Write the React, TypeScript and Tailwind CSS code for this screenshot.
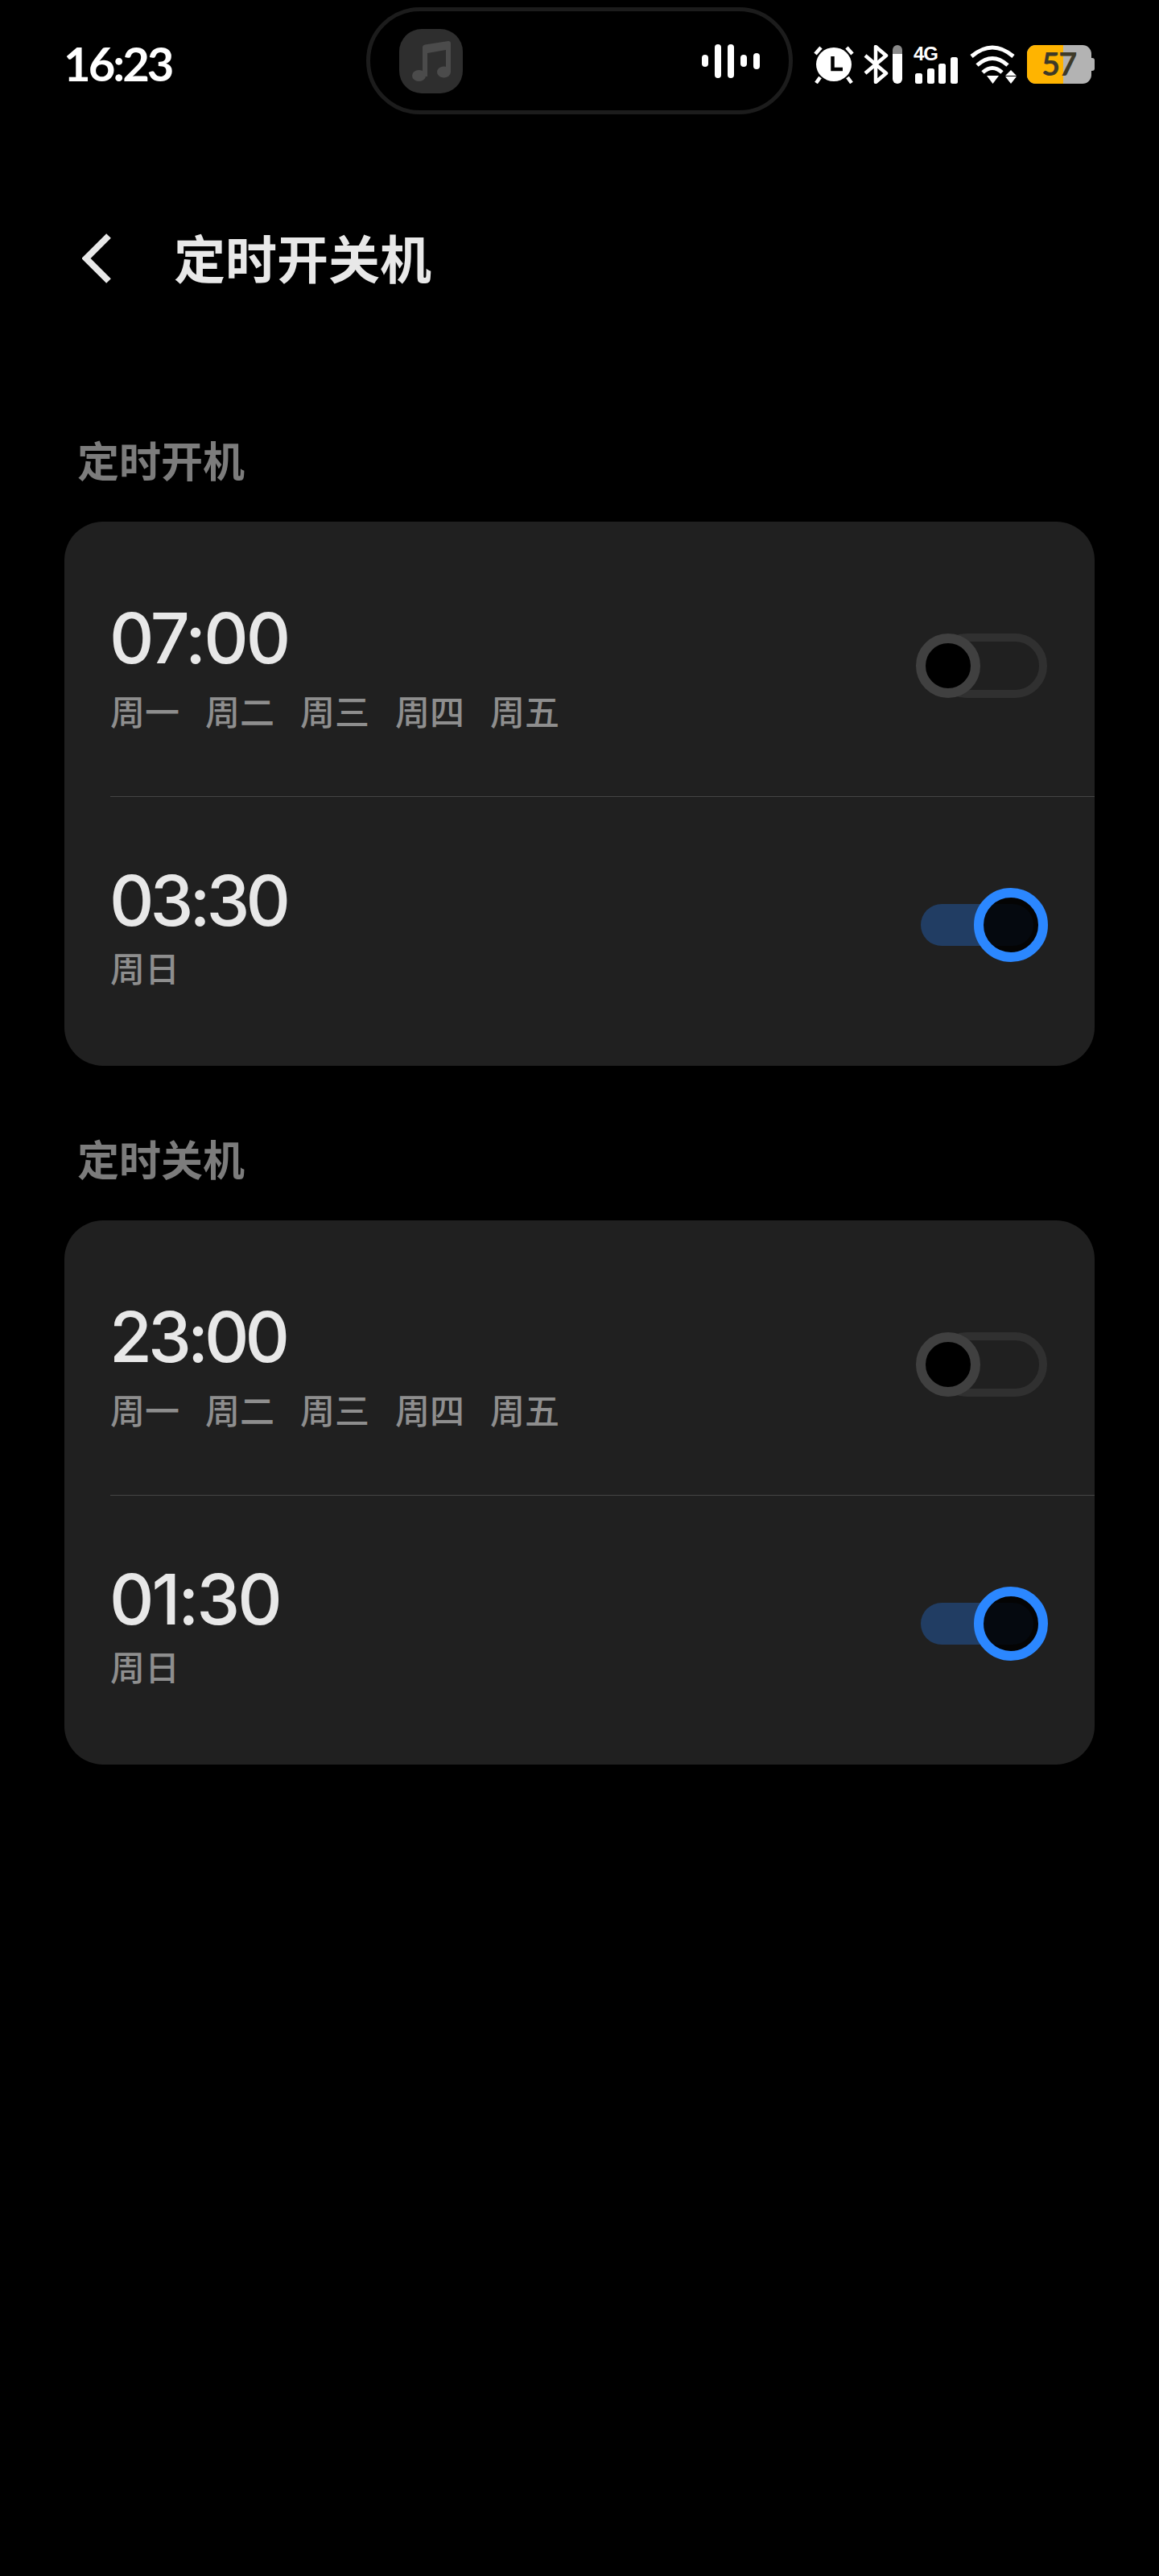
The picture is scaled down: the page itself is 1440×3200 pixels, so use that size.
import React from "react";

const cjk = { fontFamily: '"Noto Sans CJK SC", sans-serif' };

function Toggle({ on }: { on: boolean }) {
  if (on) {
    return (
      <div className="relative w-[158px] h-[92px] shrink-0 mt-[113px]">
        <div className="absolute left-0 top-[20px] w-[140px] h-[52px] rounded-full bg-[#213d63]" />
        <div className="absolute right-0 top-0 w-[92px] h-[92px] rounded-full border-[12px] border-[#2b87ff] bg-black/85" />
      </div>
    );
  }
  return (
    <div className="relative w-[163px] h-[80px] shrink-0 mt-[139px] mr-[1px]">
      <div className="absolute right-0 top-0 w-[140px] h-[80px] rounded-full border-[10px] border-[#303030]" />
      <div className="absolute left-0 top-0 w-[80px] h-[80px] rounded-full border-[12px] border-[#404040] bg-black" />
    </div>
  );
}

type RowData = { time: string; days: string[]; on: boolean; track: string };

function Row({ time, days, on, track }: RowData) {
  return (
    <div className={`flex items-start justify-between pl-[57px] pr-[58px] ${on ? "h-[334px]" : "h-[341px]"}`}>
      <div className={`flex flex-col ${on ? "pt-[79px]" : "pt-[95px]"}`}>
        <div className={`text-[86px] leading-[100px] font-medium text-[#e8e8e8] -ml-[1px] ${track}`} style={{ fontFamily: "Inter, sans-serif" }}>{time}</div>
        <div className={`flex gap-[32px] text-[43px] leading-[56px] font-medium text-[#8e8e8e] ${on ? "mt-[4px]" : "mt-[11px]"}`} style={cjk}>
          {days.map((d) => <span key={d}>{d}</span>)}
        </div>
      </div>
      <Toggle on={on} />
    </div>
  );
}

function Section({ title, rows }: { title: string; rows: RowData[] }) {
  return (
    <section>
      <h2 className="px-[96px] text-[52px] leading-[72px] font-bold text-[#7c7c7c]" style={cjk}>{title}</h2>
      <div className="mx-[80px] mt-[41px] rounded-[48px] bg-[#202020] overflow-hidden">
        <Row {...rows[0]} />
        <div className="ml-[57px] h-[1px] bg-[#454545]" />
        <Row {...rows[1]} />
      </div>
    </section>
  );
}

const wk = ["周一", "周二", "周三", "周四", "周五"];

function StatusBar() {
  return (
    <div className="flex items-start h-[160px] pl-[79px]">
      <div className="w-[376px] mt-[45px] text-[58px] leading-[68px] font-bold text-white tracking-[-3px]" style={{ fontFamily: "Lato, sans-serif" }}>16:23</div>
      <div className="flex items-center justify-between w-[530px] h-[133px] mt-[9px] rounded-full border-[5px] border-[#1c1c1c] pl-[36px] pr-[36px]">
        <div className="w-[79px] h-[80px] rounded-[28px] bg-[#2e2e2e] flex items-center justify-center">
          <svg width="48" height="50" viewBox="0 0 48 50" fill="#4b4b4b">
            <ellipse cx="8.5" cy="43" rx="8.5" ry="7" />
            <ellipse cx="39.5" cy="38.5" rx="8.5" ry="7" />
            <path d="M13 8 Q13 5 16 4.5 L45 0 Q48 0 48 3 V39 H42 V11 L19 15 V44 H13Z" />
          </svg>
        </div>
        <svg width="72" height="42" viewBox="0 0 72 42" fill="white">
          <rect x="0" y="13" width="8" height="15" rx="4" />
          <rect x="16" y="0" width="8" height="42" rx="4" />
          <rect x="32" y="0" width="8" height="42" rx="4" />
          <rect x="48" y="13" width="8" height="15" rx="4" />
          <rect x="64" y="11" width="8" height="20" rx="4" />
        </svg>
      </div>
      <div className="flex items-start ml-[26px] mt-[56px] h-[48px]">
        <svg width="50" height="48" viewBox="0 0 50 48" fill="white">
          <ellipse cx="25" cy="24" rx="22" ry="21" />
          <path d="M2 11 L9 3 M48 11 L41 3 M8 40 L3 47 M42 40 L47 47" stroke="white" strokeWidth="4.5" fill="none" />
          <path d="M23.5 14 V30 H36" stroke="#000" strokeWidth="4.5" fill="none" />
        </svg>
        <svg className="ml-[12px]" width="48" height="48" viewBox="0 0 48 48" fill="none">
          <path d="M2 13 L28 35 L15 46 V2 L28 13 L2 35" stroke="white" strokeWidth="4.5" strokeLinejoin="round" />
          <path d="M36 6 a6 6 0 0 1 12 0 V11 H36Z" fill="#8a8a8a" />
          <path d="M36 11 H48 V42 a6 6 0 0 1 -12 0Z" fill="white" />
        </svg>
        <div className="relative ml-[14px] w-[55px] h-[48px]">
          <span className="absolute left-0 top-[-3px] text-[24px] leading-[28px] font-bold text-white tracking-[-1px]" style={{ fontFamily: '"Liberation Sans", sans-serif' }}>4G</span>
          <svg className="absolute left-0 top-0" width="55" height="48" viewBox="0 0 55 48" fill="white">
            <rect x="2" y="35" width="9" height="13" rx="2.5" />
            <rect x="17" y="29" width="9" height="19" rx="2.5" />
            <rect x="31" y="23" width="9" height="25" rx="2.5" />
            <rect x="46" y="15" width="9" height="33" rx="2.5" />
          </svg>
        </div>
        <svg className="ml-[14px]" width="60" height="48" viewBox="0 0 60 48" fill="none">
          <path d="M3 14 Q29 -8 55 14" stroke="white" strokeWidth="5" />
          <path d="M10 25 Q29 8 48 25" stroke="white" strokeWidth="5" />
          <path d="M17 34 Q29 23 41 34" stroke="white" strokeWidth="5" />
          <path d="M22 38 H37 L29.5 48Z M52 31 L59 38 H45Z M45 39 H59 L52 48Z" fill="white" />
        </svg>
        <div className="flex items-center ml-[12px]">
          <div className="relative w-[80px] h-[48px] rounded-[11px] overflow-hidden bg-[#b3b3b3]">
            <div className="absolute left-0 top-0 w-[45px] h-[48px] bg-[#ffb400]" />
            <span className="absolute left-[18px] top-[-1px] text-[40px] leading-[48px] font-bold text-[#3e3a28] tracking-[-2px]" style={{ fontFamily: "Lato, sans-serif" }}>57</span>
          </div>
          <div className="w-[4px] h-[16px] bg-[#b3b3b3] rounded-r-[3px]" />
        </div>
      </div>
    </div>
  );
}

export default function App() {
  return (
    <div className="w-[1440px] h-[3200px] bg-black">
      <StatusBar />
      <div className="flex items-center h-[322px] pl-[102px]">
        <svg width="36" height="62" viewBox="0 0 36 62" fill="none">
          <path d="M33 3 L5 31 L33 59" stroke="#e8e8e8" strokeWidth="8" />
        </svg>
        <h1 className="ml-[78px] pb-[6px] text-[64px] leading-[80px] font-bold text-[#e8e8e8]" style={cjk}>定时开关机</h1>
      </div>
      <div className="pt-[53px] flex flex-col gap-[79px]">
        <Section title="定时开机" rows={[{ time: "07:00", days: wk, on: false, track: "tracking-[-3px]" }, { time: "03:30", days: ["周日"], on: true, track: "tracking-[-5px]" }]} />
        <Section title="定时关机" rows={[{ time: "23:00", days: wk, on: false, track: "tracking-[-5px]" }, { time: "01:30", days: ["周日"], on: true, track: "tracking-[-3px]" }]} />
      </div>
    </div>
  );
}
